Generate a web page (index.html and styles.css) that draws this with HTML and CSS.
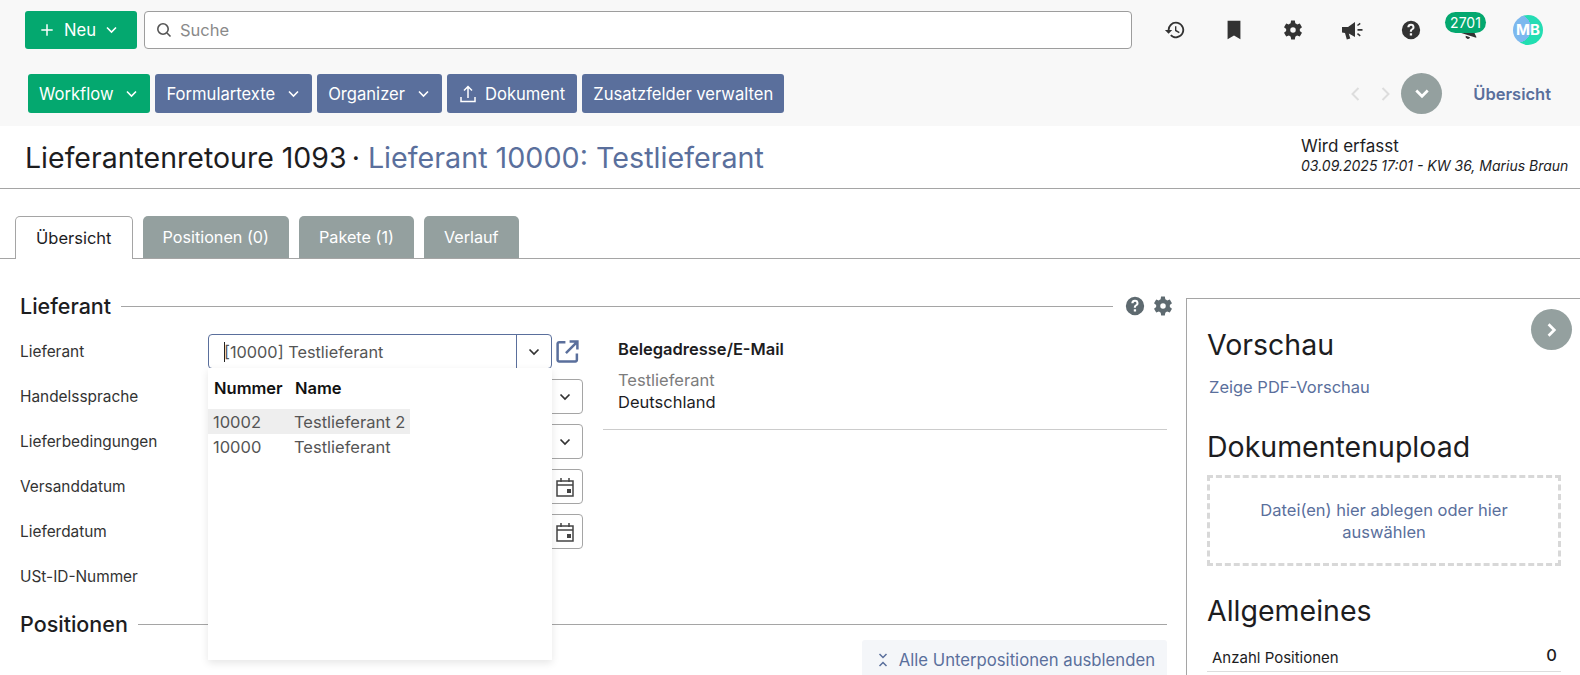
FILE: index.html
```html
<!DOCTYPE html>
<html lang="de">
<head>
<meta charset="utf-8">
<title>Lieferantenretoure 1093</title>
<link rel="stylesheet" href="styles.css">
</head>
<body>
<header class="topbar">
  <div class="row-one">
    <button class="btn btn-green btn-new">
      <svg class="ic-plus" viewBox="0 0 16 16"><path d="M8 1.500v13M1.500 8h13"/></svg>
      <span>Neu</span>
      <svg class="chev" viewBox="0 0 12 8"><path d="M1.500 1.500 6 6l4.500-4.500"/></svg>
    </button>
    <div class="search">
      <svg class="ic-search" viewBox="0 0 16 16"><circle cx="7" cy="7" r="5.200"/><path d="m11 11 3.500 3.500"/></svg>
      <span>Suche</span>
    </div>
    <nav class="tools">
      <svg class="tool" viewBox="0 0 24 24"><path d="M13 3a9 9 0 0 0-9 9H1l4 4.200L9 12H6a7 7 0 1 1 2.100 5l-1.400 1.400A9 9 0 1 0 13 3zm-1 5v5l4.300 2.500.8-1.300-3.600-2.100V8z"/></svg>
      <svg class="tool" viewBox="0 0 24 24"><path d="M5 2h14v20l-7-4-7 4z"/></svg>
      <svg class="tool" viewBox="0 0 24 24"><path d="M19.400 13.200c.1-.4.100-.8.100-1.200s0-.8-.1-1.200l2.400-1.900-2.400-4.100-2.900 1.100c-.6-.5-1.300-.9-2-1.200L14 1.700H9.900l-.5 3c-.7.3-1.400.7-2 1.200L4.600 4.800 2.200 8.900l2.400 1.900c-.1.400-.1.800-.1 1.200s0 .8.1 1.200l-2.400 1.900 2.400 4.100 2.900-1.100c.6.500 1.300.9 2 1.200l.5 3H14l.5-3c.7-.3 1.400-.7 2-1.200l2.900 1.100 2.400-4.100zM12 15a3 3 0 1 1 0-6 3 3 0 0 1 0 6z"/></svg>
      <svg class="tool" viewBox="0 1 22 21"><path d="M1 8.500v5.500l3 .5 1.800 6.500 3.500-1-1.500-5L14 18.500V3.500L7 8.500zM16 6.500l2.800-2.200.9 1.100-2.800 2.200zM16.500 10.500H21.500v1.800h-5zM16 15.800l.9-1.300 2.800 2.200-.9 1.300z"/></svg>
      <svg class="tool" viewBox="0 0 24 24"><path d="M12 2a10 10 0 1 0 0 20 10 10 0 0 0 0-20zm1.200 16h-2.500v-2.400h2.500zm2.300-7.400c-.5.7-1.100 1.100-1.600 1.500-.7.500-.9.8-.9 1.900h-2.300c0-1.800.6-2.600 1.600-3.300.8-.6 1.300-1 1.300-1.800a1.600 1.600 0 0 0-3.200.2H8a3.900 3.900 0 0 1 7.800-.3c0 .7-.1 1.300-.3 1.800z"/></svg>
      <div class="bell">
        <svg class="tool bell-icon" viewBox="0 0 24 24"><path d="M12 3a6 6 0 0 0-6 6v5l-3 3v1h18v-1l-3-3V9a6 6 0 0 0-6-6zM9.500 19.500a2.500 2.500 0 0 0 5 0z"/></svg>
        <span class="badge">2701</span>
      </div>
      <div class="avatar">MB</div>
    </nav>
  </div>
  <div class="row-two">
    <button class="btn btn-green has-chev">Workflow<svg class="chev" viewBox="0 0 12 8"><path d="M1.500 1.500 6 6l4.500-4.500"/></svg></button>
    <button class="btn btn-blue has-chev">Formulartexte<svg class="chev" viewBox="0 0 12 8"><path d="M1.500 1.500 6 6l4.500-4.500"/></svg></button>
    <button class="btn btn-blue has-chev">Organizer<svg class="chev" viewBox="0 0 12 8"><path d="M1.500 1.500 6 6l4.500-4.500"/></svg></button>
    <button class="btn btn-blue btn-doc"><svg class="ic-upload" viewBox="0 0 16 18"><path d="M8 13V2M4 5.500 8 1.500l4 4M1 12v4.500h14V12"/></svg>Dokument</button>
    <button class="btn btn-blue">Zusatzfelder verwalten</button>
    <div class="pager">
      <svg class="pg" viewBox="0 0 10 16"><path d="M8 2 2 8l6 6"/></svg>
      <svg class="pg pg-next" viewBox="0 0 10 16"><path d="m2 2 6 6-6 6"/></svg>
      <button class="round"><svg viewBox="0 0 14 10"><path d="M2 2l5 5 5-5"/></svg></button>
      <a class="overview">Übersicht</a>
    </div>
  </div>
</header>

<section class="title-row">
  <h1>Lieferantenretoure 1093 <span class="dot">·</span> <span class="link">Lieferant 10000: Testlieferant</span></h1>
  <div class="state">
    <div class="state-main">Wird erfasst</div>
    <div class="state-sub">03.09.2025 17:01 - KW 36, Marius Braun</div>
  </div>
</section>

<div class="tabs">
  <div class="tab active">Übersicht</div>
  <div class="tab">Positionen (0)</div>
  <div class="tab">Pakete (1)</div>
  <div class="tab">Verlauf</div>
</div>

<main class="content">
  <div class="left">
    <div class="section-head first">
      <h2>Lieferant</h2><span class="rule"></span>
      <svg class="mini" viewBox="0 0 24 24"><path d="M12 2a10 10 0 1 0 0 20 10 10 0 0 0 0-20zm1.200 16h-2.500v-2.400h2.500zm2.300-7.400c-.5.7-1.100 1.100-1.600 1.500-.7.500-.9.8-.9 1.900h-2.300c0-1.800.6-2.600 1.600-3.300.8-.6 1.300-1 1.300-1.800a1.600 1.600 0 0 0-3.200.2H8a3.900 3.900 0 0 1 7.800-.3c0 .7-.1 1.300-.3 1.800z"/></svg>
      <svg class="mini" viewBox="0 0 24 24"><path d="M19.400 13.200c.1-.4.100-.8.100-1.200s0-.8-.1-1.200l2.400-1.900-2.400-4.100-2.900 1.100c-.6-.5-1.300-.9-2-1.200L14 1.700H9.900l-.5 3c-.7.3-1.400.7-2 1.200L4.600 4.800 2.200 8.900l2.400 1.900c-.1.400-.1.800-.1 1.200s0 .8.1 1.200l-2.400 1.900 2.400 4.100 2.900-1.100c.6.500 1.300.9 2 1.200l.5 3H14l.5-3c.7-.3 1.400-.7 2-1.200l2.900 1.100 2.400-4.100zM12 15a3 3 0 1 1 0-6 3 3 0 0 1 0 6z"/></svg>
    </div>
    <div class="form-grid">
      <div class="fields">
        <div class="field">
          <label>Lieferant</label>
          <div class="combo focus">
            <div class="combo-value"><span class="caret"></span>[10000] Testlieferant</div>
            <div class="combo-btn"><svg class="chev dark" viewBox="0 0 12 8"><path d="M1.500 1.500 6 6l4.500-4.500"/></svg></div>
          </div>
          <svg class="ic-open" viewBox="0 0 24 24"><path d="M10 3H4a1.500 1.500 0 0 0-1.500 1.500v15.500a1.500 1.500 0 0 0 1.500 1.500h15.500a1.500 1.500 0 0 0 1.500-1.500V14M14 2.500h7.500V10M21.500 2.500 10.500 13.500"/></svg>
          <div class="dropdown">
            <div class="dd-head"><span class="c1">Nummer</span><span>Name</span></div>
            <div class="dd-row hl"><span class="c1">10002</span><span>Testlieferant 2</span></div>
            <div class="dd-row"><span class="c1">10000</span><span>Testlieferant</span></div>
          </div>
        </div>
        <div class="field">
          <label>Handelssprache</label>
          <div class="combo"><div class="combo-value"></div><div class="combo-side"><svg class="chev dark" viewBox="0 0 12 8"><path d="M1.500 1.500 6 6l4.500-4.500"/></svg></div></div>
        </div>
        <div class="field">
          <label>Lieferbedingungen</label>
          <div class="combo"><div class="combo-value"></div><div class="combo-side"><svg class="chev dark" viewBox="0 0 12 8"><path d="M1.500 1.500 6 6l4.500-4.500"/></svg></div></div>
        </div>
        <div class="field">
          <label>Versanddatum</label>
          <div class="combo"><div class="combo-value"></div><div class="combo-side"><svg class="ic-cal" viewBox="0 0 18 20"><path d="M1 4h16v15H1zM1 8h16M5 1v4M13 1v4"/><rect x="11" y="12" width="4" height="4"/></svg></div></div>
        </div>
        <div class="field">
          <label>Lieferdatum</label>
          <div class="combo"><div class="combo-value"></div><div class="combo-side"><svg class="ic-cal" viewBox="0 0 18 20"><path d="M1 4h16v15H1zM1 8h16M5 1v4M13 1v4"/><rect x="11" y="12" width="4" height="4"/></svg></div></div>
        </div>
        <div class="field"><label>USt-ID-Nummer</label></div>
      </div>
      <div class="address">
        <div class="addr-title">Belegadresse/E-Mail</div>
        <div class="addr-name">Testlieferant</div>
        <div class="addr-country">Deutschland</div>
      </div>
    </div>
    <div class="section-head second">
      <h2>Positionen</h2><span class="rule"></span>
    </div>
    <div class="collapse-row">
      <button class="collapse"><svg viewBox="0 0 10 14"><path d="m1.500 1 3.500 3.500L8.500 1M1.500 13 5 9.500 8.500 13"/></svg>Alle Unterpositionen ausblenden</button>
    </div>
  </div>
  <aside class="panel">
    <button class="round panel-toggle"><svg viewBox="0 0 10 14"><path d="m2 2 5 5-5 5"/></svg></button>
    <h3>Vorschau</h3>
    <a class="pdf">Zeige PDF-Vorschau</a>
    <h3 class="upload-title">Dokumentenupload</h3>
    <div class="dropzone">Datei(en) hier ablegen oder hier auswählen</div>
    <h3 class="general-title">Allgemeines</h3>
    <div class="stat"><span>Anzahl Positionen</span><b>0</b></div>
  </aside>
</main>
</body>
</html>
```
FILE: styles.css
```css
* { box-sizing: border-box; }
html, body { margin: 0; height: 675px; overflow: hidden; }
body { font-family: Inter, "Liberation Sans", sans-serif; font-size: 16.5px; color: #1d1d1f; background: #fff; }
svg { display: block; }
h1, h2, h3 { margin: 0; font-weight: 400; }

.topbar { height: 126px; background: #f8f8f8; padding: 11px 0 0 25px; }
.row-one { display: flex; align-items: flex-start; height: 38px; }
.btn { display: inline-flex; align-items: center; height: 39px; padding: 0 11px; border: 0; border-radius: 3px; color: #fff; font: 400 16.6px Inter, sans-serif; white-space: nowrap; }
.btn-green { background: #04a86f; }
.btn-blue { background: #5a6f9c; }
.btn-new { width: 112px; height: 38px; padding: 0 0 0 15px; }
.has-chev { padding: 0 12px 0 11px; }
.has-chev .chev { margin-left: 12px; }
.btn-doc { padding: 0 12px 0 13px; }
.ic-plus { width: 14px; height: 14px; margin-right: 10px; fill: none; stroke: #fff; stroke-width: 1.700; }
.chev { width: 13px; height: 8px; margin-left: 9px; fill: none; stroke: #fff; stroke-width: 1.600; }
.chev.dark { margin: 0; width: 12px; stroke: #333; stroke-width: 1.700; }
.search { display: flex; align-items: center; width: 988px; height: 38px; margin-left: 7px; padding-left: 11px; background: #fff; border: 1px solid #9d9d9d; border-radius: 4px; color: #8a8a8a; }
.ic-search { width: 16px; height: 16px; margin-right: 8px; fill: none; stroke: #555; stroke-width: 1.600; }
.tools { display: flex; align-items: center; height: 38px; margin-left: 32px; }
.tool { width: 22px; height: 22px; fill: #333; }
.tools > .tool { margin-right: 37px; }
.bell { position: relative; width: 22px; height: 22px; margin-right: 32px; }
.bell-icon { transform: rotate(18deg); }
.badge { position: absolute; left: -14px; top: -7px; width: 41px; height: 21px; border-radius: 11px; background: #04a86f; color: #fff; font: 400 14px/21px Inter, sans-serif; text-align: center; }
.avatar { width: 30px; height: 30px; border-radius: 50%; background: radial-gradient(circle at 12% 45%, #7cb8ee 0 46%, transparent 47%), linear-gradient(160deg, #25dcb4 0 50%, #1fe0b0 100%); color: #fff; font: 700 15px/30px Inter, sans-serif; text-align: center; }

.row-two { display: flex; align-items: center; margin: 24px 0 0 3px; padding-right: 29px; gap: 5px; }
.pager { display: flex; align-items: center; margin-left: auto; }
.pg { width: 11px; height: 16px; margin-right: 19px; fill: none; stroke: #ddd; stroke-width: 2; }
.pg-next { margin-right: 10px; }
.round { display: flex; align-items: center; justify-content: center; width: 41px; height: 41px; padding: 0; border: 0; border-radius: 50%; background: #94a09f; }
.round svg { width: 16px; height: 16px; fill: none; stroke: #fff; stroke-width: 2.400; }
.overview { margin-left: 31px; color: #5a6f9c; font-weight: 600; white-space: nowrap; }

.title-row { display: flex; justify-content: space-between; height: 63px; padding: 8px 14px 0 25px; border-bottom: 1px solid #a5a5a5; }
h1 { font-size: 28.5px; line-height: 48px; color: #1d1d1f; white-space: nowrap; }
h1 .dot { margin: 0 0 0 -3px; }
h1 .link { color: #5a6f9c; font-size: 28.7px; }
.state { width: 265px; padding-top: 1px; }
.state-main { font-size: 17px; line-height: 22px; }
.state-sub { font-size: 14px; font-style: italic; line-height: 18px; white-space: nowrap; }

.tabs { display: flex; gap: 10px; height: 70px; padding: 27px 0 0 15px; border-bottom: 1px solid #a5a5a5; }
.tab { display: flex; align-items: center; height: 42px; padding: 0 20px; border-radius: 5px 5px 0 0; background: #94a09f; color: #fff; font-size: 16.2px; }
.tab.active { position: relative; height: 43px; background: #fff; color: #1d1d1f; border: 1px solid #a5a5a5; border-bottom: 0; font-size: 16.5px; }

.content { display: flex; }
.left { width: 1186px; padding: 33px 19px 0 20px; }
.section-head { display: flex; align-items: center; height: 28px; }
.section-head.first { margin-right: -7px; }
h2 { font-size: 21.5px; font-weight: 500; line-height: 28px; }
.rule { flex: 1; height: 1px; margin-left: 10px; background: #a5a5a5; }
.mini { width: 22px; height: 22px; margin-left: 6px; fill: #5e6a70; }
.section-head .rule + .mini { margin-left: 11px; }
.form-grid { display: flex; margin-top: 9px; }
.fields { width: 583px; }
.field { position: relative; display: flex; align-items: center; height: 45px; padding: 0; }
.field label { width: 188px; font-size: 15.4px; color: #333; }
.combo { display: flex; width: 375px; height: 35px; background: #fff; border: 1px solid #a5a5a5; border-radius: 4px; }
.combo.focus { width: 344px; border-color: #5a6f9c; }
.combo-value { flex: 1; display: flex; align-items: center; padding-left: 15px; color: #555; font-size: 16.3px; }
.caret { width: 1px; height: 20px; background: #222; margin-right: -1px; }
.combo-btn { display: flex; align-items: center; justify-content: center; width: 35px; border-left: 1px solid #5a6f9c; }
.combo-side { display: flex; align-items: center; justify-content: center; width: 34px; }
.ic-open { width: 25px; height: 25px; margin-left: 3px; fill: none; stroke: #5a6f9c; stroke-width: 2.400; }
.ic-cal { width: 18px; height: 20px; fill: none; stroke: #444; stroke-width: 1.500; }
.ic-cal rect { fill: #444; stroke: none; }
.ic-upload { width: 16px; height: 18px; margin-right: 9px; fill: none; stroke: #fff; stroke-width: 1.500; }
.dropdown { position: absolute; z-index: 5; left: 188px; top: 39px; width: 344px; height: 292px; padding-top: 10px; background: #fff; box-shadow: 0 3px 8px rgba(0,0,0,.1); color: #555; }
.dd-head { display: flex; height: 29px; margin-bottom: 2px; padding-left: 6px; font-weight: 600; color: #111; }
.dd-row { display: flex; align-items: center; width: 202px; height: 25px; padding-left: 5px; }
.c1 { width: 81px; }
.dd-row.hl { background: #eee; }

.address { flex: 1; height: 101px; padding: 0 0 15px 15px; border-bottom: 1px solid #ccc; }
.addr-title { height: 22px; box-sizing: content-box; font-weight: 600; line-height: 22px; padding: 9px 0 1px; margin-bottom: 8px; }
.addr-name { color: #7c7c7c; line-height: 22px; }
.addr-country { line-height: 22px; }

.section-head.second { margin-top: 11px; }
.collapse-row { display: flex; justify-content: flex-end; margin-top: 2px; }
.collapse { display: flex; align-items: center; height: 40px; padding: 0 12px 0 16px; border: 0; border-radius: 3px; background: #f4f6f9; color: #5a6f9c; font: 400 16.7px Inter, sans-serif; white-space: nowrap; }
.collapse svg { width: 10px; height: 14px; margin-right: 11px; fill: none; stroke: #5a6f9c; stroke-width: 1.500; }

.panel { position: relative; flex: 1; height: 378px; margin-top: 39px; padding: 27px 19px 0 20px; border-top: 1px solid #a5a5a5; border-left: 1px solid #a5a5a5; }
.panel-toggle { position: absolute; top: 10px; right: 8px; }
h3 { font-size: 28.5px; line-height: 38px; white-space: nowrap; }
.pdf { display: block; margin: 12px 0 0 2px; color: #5a6f9c; line-height: 22px; }
.upload-title { margin-top: 30px; }
.dropzone { display: flex; align-items: center; justify-content: center; height: 91px; margin-top: 9px; padding: 0 30px; border: 3px dashed #d8d8d8; color: #5a6f9c; line-height: 22px; text-align: center; }
.general-title { margin-top: 26px; }
.stat { display: flex; justify-content: space-between; align-items: center; height: 42px; padding: 14px 4px 0 5px; border-bottom: 1px solid #ddd; font-size: 15px; }
.stat b { margin-top: -6px; font-size: 16.5px; font-weight: 500; }
```
